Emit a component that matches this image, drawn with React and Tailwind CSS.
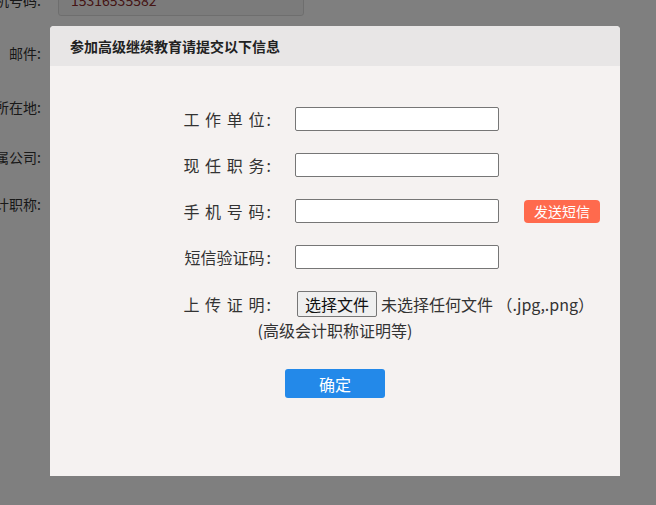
const FONT = "font-['Noto_Sans_CJK_SC','Microsoft_YaHei',sans-serif]"

const BG_ROWS = [
  ['邮件', 'mt-[27px]'],
  ['所在地', 'mt-[34px]'],
  ['所属公司', 'mt-[30px]'],
  ['会计职称', 'mt-[27px]'],
]

const FIELDS = [
  ['工作单位', true],
  ['现任职务', true],
  ['手机号码', true],
  ['短信验证码', false],
]

function Label({ text, spaced }) {
  return (
    <div className="flex w-[221px] shrink-0 justify-end text-[16px] leading-[24px] text-[#333]">
      {spaced ? (
        <>
          <span className="tracking-[5.7px]">{text.slice(0, -1)}</span>
          <span>{text.slice(-1)}</span>
        </>
      ) : (
        <span>{text}</span>
      )}
      <span className="ml-[2px]">:</span>
    </div>
  )
}

export default function App() {
  return (
    <div className={`relative h-[505px] w-[656px] overflow-hidden bg-white ${FONT}`}>
      {/* page behind the dialog */}
      <div className="flex flex-col text-[14px] text-[#333]">
        <div className="-mt-[16px] flex h-[32px] items-center">
          <div className="flex w-[41px] shrink-0 justify-end whitespace-nowrap">
            <span>手机号码:</span>
          </div>
          <div className="ml-[17px] flex h-[32px] w-[246px] items-center rounded-[3px] border border-[#ddd] bg-[#f7f7f7] pl-[12px] text-[#8b2a2a]">
            15316535582
          </div>
        </div>
        {BG_ROWS.map(([t, mt]) => (
          <div key={t} className={`flex h-[20px] items-center ${mt}`}>
            <div className="flex w-[41px] shrink-0 justify-end whitespace-nowrap">
              <span>{t}:</span>
            </div>
          </div>
        ))}
      </div>

      {/* overlay */}
      <div className="absolute inset-0 bg-black/50" />

      {/* dialog */}
      <div className="absolute left-[50px] top-[26px] flex h-[450px] w-[570px] flex-col overflow-hidden rounded-t-[4px] bg-[#f5f2f1]">
        <div className="flex h-[40px] shrink-0 items-center bg-[#e8e6e6] pl-[20px] text-[14px] font-bold text-[#222]">
          参加高级继续教育请提交以下信息
        </div>

        <div className="flex flex-col pt-[41px]">
          <div className="flex flex-col gap-[22px]">
            {FIELDS.map(([t, spaced], i) => (
              <div key={t} className="flex h-[24px] items-center">
                <Label text={t} spaced={spaced} />
                <div className="ml-[24px] h-[24px] w-[204px] rounded-[2px] border border-[#767676] bg-white" />
                {i === 2 && (
                  <div className="ml-[25px] flex h-[23px] w-[76px] items-center justify-center rounded-[4px] bg-[#ff6a4d] text-[14px] text-white">
                    发送短信
                  </div>
                )}
              </div>
            ))}
          </div>

          <div className="mt-[22px] flex h-[26px] items-center">
            <Label text="上传证明" spaced />
            <div className="ml-[26px] flex h-[26px] w-[80px] items-center justify-center rounded-[2px] border border-[#767676] bg-[#efefef] text-[16px] text-[#111]">
              选择文件
            </div>
            <span className="ml-[4px] whitespace-pre text-[16px] text-[#333]">未选择任何文件 （.jpg,.png）</span>
          </div>

          <div className="mt-[3px] text-center text-[16px] leading-[20px] text-[#333]">(高级会计职称证明等)</div>

          <div className="mt-[29px] flex justify-center">
            <div className="flex h-[29px] w-[100px] items-center justify-center rounded-[3px] bg-[#2389e9] text-[16px] text-white">
              确定
            </div>
          </div>
        </div>
      </div>
    </div>
  )
}
